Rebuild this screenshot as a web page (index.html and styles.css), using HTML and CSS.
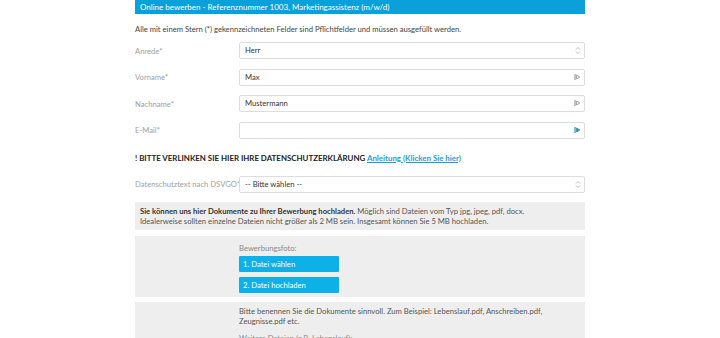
FILE: index.html
```html
<!DOCTYPE html>
<html lang="de">
<head>
  <meta charset="UTF-8">
  <title>Online bewerben</title>
  <link rel="stylesheet" href="styles.css">
</head>
<body>
<div id="form">
  <div class="head">Online bewerben - Referenznummer 1003, Marketingassistenz (m/w/d)</div>
  <p class="intro">Alle mit einem Stern (*) gekennzeichneten Felder sind Pflichtfelder und müssen ausgefüllt werden.</p>

  <div class="row">
    <label>Anrede*</label>
    <div class="field">Herr
      <svg class="sel" width="6" height="9" viewBox="0 0 6 9"><path d="M1 3.5L3 1.5L5 3.5M1 5.5L3 7.5L5 5.5" fill="none" stroke="#aaa" stroke-width="0.8"/></svg>
    </div>
  </div>
  <div class="row">
    <label>Vorname*</label>
    <div class="field">Max
      <svg class="fill" width="7" height="8" viewBox="0 0 7 8"><path d="M1 1V7" stroke="#999" stroke-width="1.2"/><path d="M2.6 2L5.8 4L2.6 6Z" fill="none" stroke="#999" stroke-width="0.9"/></svg>
    </div>
  </div>
  <div class="row">
    <label>Nachname*</label>
    <div class="field">Mustermann
      <svg class="fill" width="7" height="8" viewBox="0 0 7 8"><path d="M1 1V7" stroke="#999" stroke-width="1.2"/><path d="M2.6 2L5.8 4L2.6 6Z" fill="none" stroke="#999" stroke-width="0.9"/></svg>
    </div>
  </div>
  <div class="row">
    <label>E-Mail*</label>
    <div class="field">
      <svg class="fill" width="7" height="8" viewBox="0 0 7 8"><path d="M1 1V7" stroke="#3a8c9c" stroke-width="1.2"/><path d="M2.6 2L5.8 4L2.6 6Z" fill="#3a8c9c" stroke="#3a8c9c" stroke-width="0.9"/></svg>
    </div>
  </div>

  <p class="warn">! BITTE VERLINKEN SIE HIER IHRE DATENSCHUTZERKLÄRUNG <a href="#">Anleitung (Klicken Sie hier)</a></p>

  <div class="row">
    <label>Datenschutztext nach DSVGO*</label>
    <div class="field">-- Bitte wählen --
      <svg class="sel" width="6" height="9" viewBox="0 0 6 9"><path d="M1 3.5L3 1.5L5 3.5M1 5.5L3 7.5L5 5.5" fill="none" stroke="#aaa" stroke-width="0.8"/></svg>
    </div>
  </div>

  <div class="box info">
    <b>Sie können uns hier Dokumente zu Ihrer Bewerbung hochladen.</b> Möglich sind Dateien vom Typ jpg, jpeg, pdf, docx.<br>
    Idealerweise sollten einzelne Dateien nicht größer als 2 MB sein. Insgesamt können Sie 5 MB hochladen.
  </div>

  <div class="box upload">
    <div class="lbl">Bewerbungsfoto:</div>
    <div class="btn">1. Datei wählen</div>
    <div class="btn">2. Datei hochladen</div>
  </div>

  <div class="box upload">
    <p class="note">Bitte benennen Sie die Dokumente sinnvoll. Zum Beispiel: Lebenslauf.pdf, Anschreiben.pdf,<br>Zeugnisse.pdf etc.</p>
    <div class="lbl">Weitere Dateien (z.B. Lebenslauf):</div>
    <div class="btn">1. Datei wählen</div>
  </div>
</div>
</body>
</html>
```

FILE: styles.css
```css
body,div,p{margin:0;padding:0;}
body{background:#fff;font:7.65px/10px Lato,"Open Sans",Arial,sans-serif;color:#444;}
#form{width:450px;margin:0 auto;}
#form .head{height:14px;line-height:14px;background:#0aa1db;color:#fff;padding-left:5px;font-size:8px;}
#form .intro{margin:10px 0 0;line-height:10px;color:#444;}
#form .row{display:flex;align-items:center;margin-top:8px;}
#form .row + .row{margin-top:9.5px;}
#form .row label{width:104px;flex-shrink:0;color:#a0a0a0;white-space:nowrap;}
#form .field{position:relative;flex:1;height:15px;line-height:15px;border:1px solid #ddd;border-radius:2px;padding-left:5px;color:#333;}
#form .field svg{position:absolute;right:3px;top:3px;}
#form .warn{margin:14px 0 0;font-weight:700;color:#222;font-size:7.9px;}
#form .warn a{color:#1aa0d8;text-decoration:underline;}
#form .warn + .row{margin-top:13px;}
#form .box{background:#eee;margin-top:6px;}
#form .info{margin-top:9px;padding:4px 5px;line-height:10px;color:#555;}
#form .info b{color:#333;}
#form .upload{padding:7px 0 4px 104px;}
#form .upload + .upload{margin-top:5px;}
#form .lbl{color:#888;line-height:10px;}
#form .btn{width:96px;height:16px;line-height:16px;background:#0db1e7;color:#fff;padding-left:4px;border-radius:1px;margin-top:3px;}
#form .btn + .btn{margin-top:5px;}
#form .note{line-height:10.5px;color:#555;margin:-3px 0 6px;}
```
